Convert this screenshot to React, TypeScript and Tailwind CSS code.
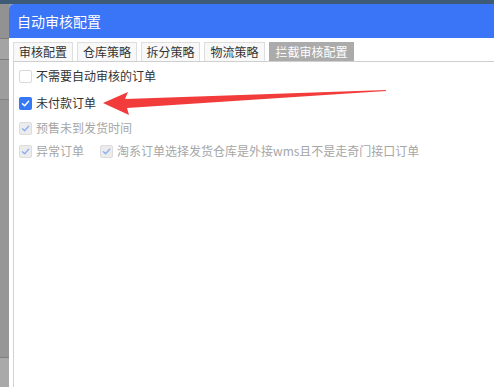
import React from "react";

const tabs = [
  { t: "审核配置", w: "w-[60px]" },
  { t: "仓库策略", w: "w-[60px]" },
  { t: "拆分策略", w: "w-[59px]" },
  { t: "物流策略", w: "w-[61px]" },
];

function Box({ state }: { state: "off" | "on" | "disabled" }) {
  if (state === "off") {
    return <span className="w-[13px] h-[13px] rounded-[2px] border border-[#d9d9d9] bg-white shrink-0" />;
  }
  const on = state === "on";
  return (
    <span
      className={`w-[13px] h-[13px] rounded-[2px] shrink-0 flex items-center justify-center ${
        on ? "bg-[#3478f6]" : "bg-[#ececec] border border-[#dcdcdc]"
      }`}
    >
      <svg width="9" height="9" viewBox="0 0 10 10" fill="none">
        <path
          d="M1.6 5.2 L4 7.5 L8.5 2.6"
          stroke={on ? "#ffffff" : "#8fb0ee"}
          strokeWidth="1.6"
          strokeLinecap="round"
          strokeLinejoin="round"
        />
      </svg>
    </span>
  );
}

function Check({ state, label }: { state: "off" | "on" | "disabled"; label: string }) {
  return (
    <label className="flex items-center gap-[4px] h-[14px]">
      <Box state={state} />
      <span className={state === "disabled" ? "text-[#a6a6a6]" : "text-[#333]"}>{label}</span>
    </label>
  );
}

export default function App() {
  return (
    <div
      className="relative w-[494px] h-[387px] overflow-hidden bg-[#9a9a9a] flex flex-col"
      style={{ fontFamily: '"Noto Sans CJK SC", "Noto Sans", sans-serif' }}
    >
      {/* page behind the dialog */}
      <div className="h-[4px] bg-[#3d5b77] shrink-0" />
      <div className="flex flex-1 min-h-0">
        <div className="w-[9px] shrink-0 flex flex-col bg-[#8e8e8e]">
          <div className="h-[34px] bg-[#929292]" />
          <div className="h-[22px] border-y border-[#7c7c7c] bg-[#a4a4a4]" />
          <div className="h-[40px] border-b border-[#848484] bg-[#9d9d9d]" />
          <div className="flex-1 bg-[#969696]" />
          <div className="h-[30px] border-t border-[#7f7f7f] bg-[#a9a9a9]" />
        </div>

        {/* dialog */}
        <div className="flex-1 flex flex-col rounded-tl-[5px] overflow-hidden bg-white">
          <div className="h-[34px] shrink-0 bg-[#3a74f7] flex items-center pl-[8px] text-white text-[14px]">
            自动审核配置
          </div>
          <div className="flex-1 flex flex-col pl-[4px] pt-[5px]">
            <div className="flex items-end gap-[4px] h-[19px] border-b border-[#cfcfcf] text-[12px]">
              {tabs.map(({ t, w }) => (
                <div
                  key={t}
                  className={`${w} h-[19px] flex items-center justify-center border border-b-0 border-[#dedede] bg-[#f8f8f8] text-[#333]`}
                >
                  {t}
                </div>
              ))}
              <div className="w-[85px] h-[19px] flex items-center justify-center bg-[#ababab] text-white">
                拦截审核配置
              </div>
            </div>
            <div className="flex-1 border-l border-[#d2d2d2] flex flex-col pl-[5px] pt-[7px] text-[12px]">
              <Check state="off" label="不需要自动审核的订单" />
              <div className="mt-[13px]">
                <Check state="on" label="未付款订单" />
              </div>
              <div className="mt-[11px]">
                <Check state="disabled" label="预售未到发货时间" />
              </div>
              <div className="mt-[9px] flex items-center gap-[16px]">
                <Check state="disabled" label="异常订单" />
                <Check state="disabled" label="淘系订单选择发货仓库是外接wms且不是走奇门接口订单" />
              </div>
            </div>
          </div>
        </div>
      </div>

      {/* annotation arrow */}
      <svg className="absolute left-0 top-0 pointer-events-none" width="494" height="387">
        <path d="M103 103 L128 92 L125 99 L386 90 L386 91 L127 108 L129 115 Z" fill="#f23c3c" />
      </svg>
    </div>
  );
}
